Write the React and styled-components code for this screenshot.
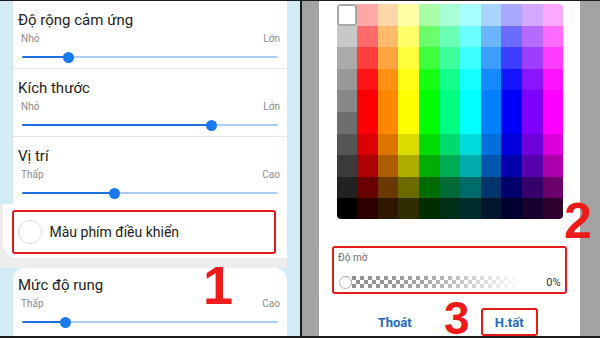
import React from 'react';
import styled, { createGlobalStyle } from 'styled-components';

const Global = createGlobalStyle`
  html, body { margin: 0; padding: 0; background: #1c1c1c; }
  body { font-family: Roboto, "Noto Sans", "Liberation Sans", sans-serif; }
`;

const Shot = styled.div`
  width: 600px;
  height: 338px;
  box-sizing: border-box;
  padding: 1px 0 2px;
  display: flex;
  gap: 2px;
  background: #1c1c1c;
  overflow: hidden;
`;

/* ---------- left phone ---------- */
const LeftPane = styled.div`
  position: relative;
  width: 300px;
  flex: none;
  display: flex;
  flex-direction: column;
  background: #d3ebf5;
  overflow: hidden;
`;

const Card = styled.div`
  margin: 0 13px;
  background: #fff;
  border-radius: ${p => (p.$roundTop ? '12px 12px 0 0' : '0')};
  flex: ${p => (p.$grow ? '1' : 'none')};
`;

const SettingRow = styled.div`
  padding: ${p => (p.$top ? '7px' : '9px')} 5px 5px;
  border-bottom: ${p => (p.$divider ? '1px solid #e6e6e6' : 'none')};
`;

const Title = styled.div`
  font-size: 15px;
  line-height: 20px;
  color: #1e1e1e;
`;

const Scale = styled.div`
  display: flex;
  justify-content: space-between;
  margin-top: 2px;
  padding: 0 2px 0 3px;
  font-size: 10px;
  line-height: 14px;
  color: #8c8c8c;
`;

const Slider = styled.div`
  position: relative;
  height: 12px;
  margin: 5px 4px 0;
  display: flex;
  align-items: center;
`;

const Track = styled.div`
  width: 100%;
  height: 2px;
  border-radius: 1px;
  background: linear-gradient(
    to right,
    #1f6fde ${p => p.$value}%,
    #abcdf3 ${p => p.$value}%
  );
`;

const Thumb = styled.span`
  position: absolute;
  top: 0.5px;
  width: 11px;
  height: 11px;
  margin-left: -5.5px;
  border-radius: 50%;
  background: #1a7af0;
`;

const Band = styled.div`
  height: 64px;
  flex: none;
  margin-right: 13px;
  background: #ededed;
`;

const BandCard = styled.div`
  height: 54px;
  margin-left: 3px;
  background: #fff;
  border-radius: 0 0 0 14px;
  padding-top: 6px;
  box-sizing: border-box;
`;

const Highlight = styled.div`
  box-sizing: border-box;
  border: 2.5px solid #e41b1b;
  border-radius: 3px;
`;

const ColorRow = styled(Highlight)`
  width: 264px;
  height: 44px;
  margin-left: 9px;
  display: flex;
  align-items: center;
  gap: 8px;
  padding-left: 3.5px;
`;

const Swatch = styled.span`
  width: 24px;
  height: 24px;
  box-sizing: border-box;
  border-radius: 50%;
  border: 1px solid #dcdcdc;
  background: #fff;
`;

const RowLabel = styled.span`
  font-size: 14px;
  color: #222;
`;

const Marker = styled.div`
  position: absolute;
  left: ${p => p.$x}px;
  top: ${p => p.$y}px;
  font-family: "Liberation Sans", Arial, sans-serif;
  font-weight: 700;
  font-size: ${p => p.$size}px;
  line-height: ${p => p.$lh || 1};
  color: #ee1b1b;
  pointer-events: none;
`;

/* ---------- right phone ---------- */
const RightPane = styled.div`
  position: relative;
  width: 298px;
  flex: none;
  box-sizing: border-box;
  padding: 0 20px 0 17px;
  display: flex;
  background: #a3a3a3;
  overflow: hidden;
`;

const Dialog = styled.div`
  flex: 1;
  background: #fff;
  padding: 3px 0 0 17.7px;
  display: flex;
  flex-direction: column;
`;

const Palette = styled.div`
  display: grid;
  grid-template-columns: repeat(11, 20.6px);
  grid-auto-rows: 21.6px;
  width: max-content;
  border-radius: 4px;
  overflow: hidden;
`;

const Cell = styled.div`
  box-sizing: border-box;
  background: ${p => p.$color};
  border: ${p => (p.$selected ? '2px solid #a8a8a8' : 'none')};
  border-radius: ${p => (p.$selected ? '2px' : '0')};
`;

const OpacityBox = styled(Highlight)`
  width: 235px;
  margin: 27px 0 0 -4.7px;
  padding: 4px 4.5px 2px 4px;
`;

const SmallLabel = styled.div`
  font-size: 10px;
  line-height: 12px;
  color: #707070;
`;

const OpacityLine = styled.div`
  display: flex;
  align-items: center;
  height: 16px;
  margin-top: 10px;
`;

const Checker = styled.div`
  position: relative;
  width: 182px;
  height: 16px;
  margin-left: 1.5px;
  display: flex;
  align-items: center;
`;

const CheckerBar = styled.div`
  width: 100%;
  height: 12px;
  background: repeating-conic-gradient(#8c8c8c 0 25%, #ffffff 0 50%) 0 0 / 8px 8px;
  -webkit-mask-image: linear-gradient(to right, #000 0%, rgba(0,0,0,0.8) 45%, transparent 100%);
  mask-image: linear-gradient(to right, #000 0%, rgba(0,0,0,0.8) 45%, transparent 100%);
`;

const OpacityThumb = styled.span`
  position: absolute;
  left: -1px;
  top: 1.5px;
  width: 13px;
  height: 13px;
  box-sizing: border-box;
  border-radius: 50%;
  background: #fff;
  border: 1.5px solid #b0b0b0;
`;

const Percent = styled.span`
  margin-left: auto;
  font-size: 11px;
  color: #333;
`;

const Actions = styled.div`
  display: flex;
  align-items: center;
  height: 28px;
  margin-top: 14px;
  padding-left: 41px;
`;

const ActionText = styled.span`
  font-size: 13px;
  font-weight: 700;
  color: #1d6cc4;
`;

const ConfirmBox = styled(Highlight)`
  width: 57px;
  height: 28px;
  margin-left: 69px;
  display: flex;
  align-items: center;
  justify-content: center;
  flex: none;
`;

const GRAYS = ['#ffffff', '#c8c8c8', '#aaaaaa', '#989898', '#888888', '#6e6e6e', '#555555', '#3b3b3b', '#222222', '#000000'];
const HUES = [0, 32, 60, 120, 150, 180, 210, 240, 270, 300];
const LIGHT = [83, 71, 62, 54, 50, 50, 43, 34, 21, 9];

function SliderSetting({ title, low, high, value, divider, top }) {
  return (
    <SettingRow $divider={divider} $top={top}>
      <Title>{title}</Title>
      <Scale>
        <span>{low}</span>
        <span>{high}</span>
      </Scale>
      <Slider>
        <Track $value={value} />
        <Thumb style={{ left: `${value}%` }} />
      </Slider>
    </SettingRow>
  );
}

export default function App() {
  const cells = [];
  for (let r = 0; r < 10; r++) {
    cells.push(<Cell key={`g${r}`} $color={GRAYS[r]} $selected={r === 0} />);
    HUES.forEach(h => {
      cells.push(<Cell key={`${r}-${h}`} $color={`hsl(${h}, 100%, ${LIGHT[r]}%)`} />);
    });
  }

  return (
    <>
      <Global />
      <Shot>
        <LeftPane>
          <Card>
            <SliderSetting title="Độ rộng cảm ứng" low="Nhỏ" high="Lớn" value={18} divider />
            <SliderSetting title="Kích thước" low="Nhỏ" high="Lớn" value={74} divider />
            <SliderSetting title="Vị trí" low="Thấp" high="Cao" value={36} />
          </Card>
          <Band>
            <BandCard>
              <ColorRow>
                <Swatch />
                <RowLabel>Màu phím điều khiển</RowLabel>
              </ColorRow>
            </BandCard>
          </Band>
          <Card $roundTop $grow>
            <SliderSetting title="Mức độ rung" low="Thấp" high="Cao" value={17} top />
          </Card>
          <Marker $x={203} $y={257} $size={54}>1</Marker>
        </LeftPane>

        <RightPane>
          <Dialog>
            <Palette>{cells}</Palette>
            <OpacityBox>
              <SmallLabel>Độ mờ</SmallLabel>
              <OpacityLine>
                <Checker>
                  <CheckerBar />
                  <OpacityThumb />
                </Checker>
                <Percent>0%</Percent>
              </OpacityLine>
            </OpacityBox>
            <Actions>
              <ActionText>Thoát</ActionText>
              <ConfirmBox>
                <ActionText>H.tất</ActionText>
              </ConfirmBox>
            </Actions>
          </Dialog>
          <Marker $x={262} $y={195} $size={50}>2</Marker>
          <Marker $x={142} $y={300} $size={46} $lh={0.75}>3</Marker>
        </RightPane>
      </Shot>
    </>
  );
}
